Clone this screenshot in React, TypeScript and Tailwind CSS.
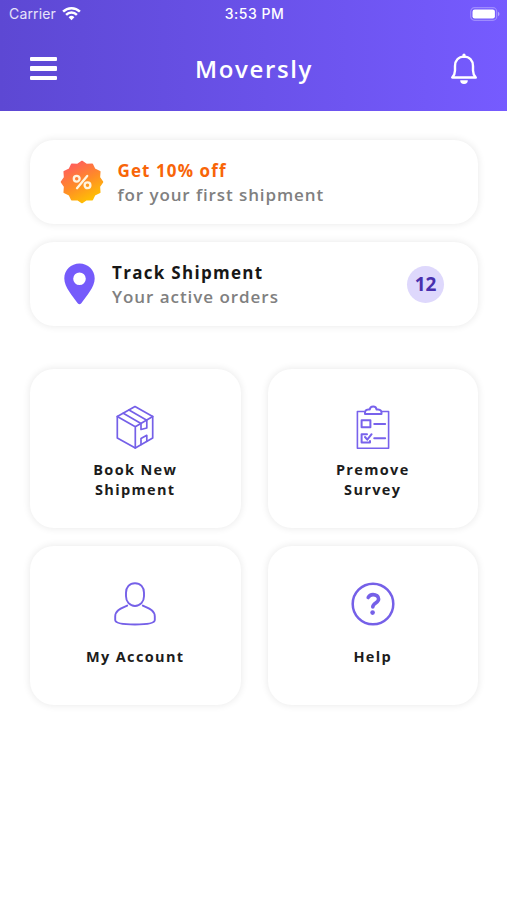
import type { ReactNode } from "react";

function WifiIcon() {
  return (
    <svg width="19" height="15" viewBox="0 0 19 15" fill="none" stroke="#fff" strokeWidth="2.5">
      <path d="M1.1 5.6a12 12 0 0 1 16.8 0" />
      <path d="M4.1 8.8a7.7 7.7 0 0 1 10.8 0" />
      <path d="M9.5 14.2 6.6 11.3a4.1 4.1 0 0 1 5.8 0z" fill="#fff" stroke="none" />
    </svg>
  );
}

function BatteryIcon() {
  return (
    <svg width="30" height="14" viewBox="0 0 30 14" fill="none">
      <rect x="0.7" y="0.7" width="26" height="12.6" rx="3.8" stroke="#fff" strokeOpacity="0.3" strokeWidth="1.2" />
      <rect x="2.5" y="2.5" width="22.4" height="9" rx="2.2" fill="#fff" />
      <path d="M28 4.8v4.4q1.5-.7 1.5-2.2T28 4.8z" fill="#fff" fillOpacity="0.45" />
    </svg>
  );
}

function BellIcon() {
  return (
    <svg width="28" height="32" viewBox="0 0 28 32" fill="none" stroke="#fff" strokeWidth="2.4" strokeLinecap="round" strokeLinejoin="round">
      <path d="M14 3.6c-5.6 0-9 4-9 9.3v4.700c0 3.500-1.200 5.200-2.800 6.900h23.600c-1.600-1.700-2.800-3.400-2.800-6.900v-4.700c0-5.300-3.400-9.300-9-9.300z" />
      <path d="M14 2v1.500" strokeWidth="3.200" />
      <path d="M10.200 27.200h7.600a3.800 3.800 0 0 1-7.600 0z" fill="#fff" stroke="none" />
    </svg>
  );
}

function OfferBadge() {
  return (
    <svg width="44" height="44" viewBox="-22 -22 44 44" fill="none">
      <defs>
        <linearGradient id="offer" x1="-10" y1="-19" x2="10" y2="19" gradientUnits="userSpaceOnUse">
          <stop stopColor="#ff5d5d" />
          <stop offset="0.5" stopColor="#ff8b28" />
          <stop offset="1" stopColor="#ffc400" />
        </linearGradient>
      </defs>
      <path
        d="M0-20.500 4.700-17.400 10.300-17.800 12.700-12.700 17.800-10.300 17.400-4.700 20.500 0 17.400 4.700 17.800 10.300 12.700 12.700 10.300 17.800 4.700 17.400 0 20.500-4.700 17.400-10.300 17.800-12.700 12.700-17.800 10.300-17.400 4.700-20.500 0-17.400-4.700-17.800-10.300-12.700-12.700-10.300-17.800-4.700-17.400z"
        fill="url(#offer)"
        stroke="url(#offer)"
        strokeWidth="1.500"
        strokeLinejoin="round"
      />
      <g stroke="#fff4df" strokeWidth="2.300" strokeLinecap="round">
        <circle cx="-5.300" cy="-3.300" r="2.900" />
        <circle cx="5.500" cy="3.300" r="2.900" />
        <path d="M5.200-6.100-5 6.200" />
      </g>
    </svg>
  );
}

function PinIcon() {
  return (
    <svg width="31" height="42" viewBox="0 0 31 42">
      <path
        d="M15.500.5C7 .5.300 7 .300 15.400c0 8.400 8.200 17.600 13.400 24.800q1.800 2 3.600 0c5.200-7.200 13.400-16.400 13.400-24.800C30.700 7 24 .5 15.500.5zm0 9a6.300 6.300 0 1 1 0 12.600 6.300 6.300 0 0 1 0-12.600z"
        fill="#755bfb"
        fillRule="evenodd"
      />
    </svg>
  );
}

function BoxIcon() {
  return (
    <svg width="44" height="46" viewBox="0 0 44 46" fill="none" stroke="#7560e8" strokeWidth="1.700" strokeLinejoin="round" strokeLinecap="round">
      <path d="M22 2.500 39.700 12.500v21.500L22.300 44 4.300 34V12.500z" />
      <path d="M4.300 12.500 22.300 22.800 39.700 12.500M22.300 22.800V44" />
      <path d="M10.300 9.200 28 19.500v6l5.800-1.500v-7.800L16 5.900" />
      <path d="M28 40.500v-6l5.800-3.200v6" />
    </svg>
  );
}

function ClipboardIcon() {
  return (
    <svg width="36" height="46" viewBox="0 0 36 46" fill="none" stroke="#7862ec" strokeLinejoin="round" strokeLinecap="round">
      <path d="M9 7.500H2.400v36.800h31.200V7.500H27" strokeWidth="1.600" />
      <path d="M10 10h16.500q.5-4.300-3.500-4.600h-1.500C21.200 1.500 15.200 1.500 14.800 5.400h-1.500Q9.500 5.700 10 10z" strokeWidth="2" />
      <rect x="6.600" y="16.300" width="8.800" height="6.900" strokeWidth="2" />
      <path d="M12 30.200H6.600v8.200H15v-1.500M10 33l2.300 2.700 4.300-5.500" strokeWidth="2" />
      <path d="M19.200 20h11M19.200 34.300h11" strokeWidth="1.900" />
    </svg>
  );
}

function UserIcon() {
  return (
    <svg width="44" height="46" viewBox="0 0 44 46" fill="none" stroke="#7560e8" strokeWidth="1.900" strokeLinecap="round" strokeLinejoin="round">
      <path d="M22 2.200c-5.500 0-9 4-9 9.500v3.600c0 5.500 3.800 9.700 9 9.700s9-4.200 9-9.700v-3.600c0-5.500-3.500-9.500-9-9.500z" />
      <path d="M14.200 24.600C10 26.800 2.200 28.500 2.200 35.500V39q0 4.500 19.800 4.500T41.800 39v-3.500c0-7-7.800-8.700-12-10.900" />
    </svg>
  );
}

function HelpIcon() {
  return (
    <svg width="46" height="46" viewBox="0 0 46 46" fill="none" stroke="#7560e8" strokeLinecap="round" strokeLinejoin="round">
      <circle cx="23" cy="23" r="20.300" strokeWidth="2.500" />
      <path d="M18.200 16.500c1-2 2.600-2.900 4.800-2.900 3.200 0 5.600 1.700 5.600 4.400 0 4-5.800 4-5.800 8" strokeWidth="3.600" />
      <circle cx="22.600" cy="31.600" r="2.300" fill="#7560e8" stroke="none" />
    </svg>
  );
}

const cardStyle = "rounded-[24px] bg-white shadow-[0_0_7px_1px_rgba(0,0,0,0.08)]";

function Tile({ icon, gap, children }: { icon: ReactNode; gap: string; children: ReactNode }) {
  return (
    <button className={`flex h-[159px] flex-col items-center pt-[35px] ${cardStyle}`}>
      <span className="flex h-[46px] items-center">{icon}</span>
      <span className={`${gap} text-[14.500px] leading-5 font-bold tracking-[1.350px] text-[#1c1c1c]`}>{children}</span>
    </button>
  );
}

export default function App() {
  return (
    <main className="h-[900px] w-[507px] overflow-hidden bg-white font-['Open_Sans',sans-serif]">
      <header className="h-[111px] bg-linear-to-r from-[#5d48d3] to-[#765bff] text-white">
        <div className="grid h-[27px] grid-cols-[1fr_auto_1fr] items-center pr-[7px] pl-[9px] font-['Inter',sans-serif]">
          <div className="flex items-center gap-[6px] text-[14px] tracking-[0.150px] text-white/85">
            <span>Carrier</span>
            <WifiIcon />
          </div>
          <span className="text-[14px] font-medium tracking-[0.500px]">3:53 PM</span>
          <div className="flex justify-end"><BatteryIcon /></div>
        </div>
        <div className="grid h-[83px] grid-cols-[1fr_auto_1fr] items-center pr-[29px] pl-[30px]">
          <button aria-label="Menu" className="flex w-[27px] flex-col gap-[5px]">
            <span className="h-[4.500px] rounded-[1px] bg-white" />
            <span className="h-[4.500px] rounded-[1px] bg-white" />
            <span className="h-[4.500px] rounded-[1px] bg-white" />
          </button>
          <h1 className="text-2xl font-semibold tracking-[1.650px]">Moversly</h1>
          <button aria-label="Notifications" className="flex justify-end"><BellIcon /></button>
        </div>
      </header>

      <div className="flex flex-col gap-[18px] pt-[29px] pr-[29px] pl-[30px]">
        <section className={`flex h-[84px] items-center pl-[30px] ${cardStyle}`}>
          <OfferBadge />
          <div className="ml-[13.500px] pt-[2px] text-[17px] leading-6">
            <p className="font-bold tracking-[1.100px] text-[#f86508]">Get 10% off</p>
            <p className="font-semibold tracking-[0.900px] text-[#808080]">for your first shipment</p>
          </div>
        </section>
        <section className={`flex h-[84px] items-center pr-[34px] pl-[34px] ${cardStyle}`}>
          <PinIcon />
          <div className="ml-[17px] pt-[2px] text-[17px] leading-6">
            <p className="font-bold tracking-[1.300px] text-[#171717]">Track Shipment</p>
            <p className="font-semibold tracking-[0.950px] text-[#808080]">Your active orders</p>
          </div>
          <span className="ml-auto flex size-[37px] items-center justify-center rounded-full bg-[#ded8fc] pt-px text-[19px] font-bold text-[#482fae]">12</span>
        </section>
      </div>

      <nav className="grid grid-cols-2 gap-x-[27px] gap-y-[18px] pt-[43px] pr-[29px] pl-[30px]">
        <Tile icon={<BoxIcon />} gap="mt-[10px]">Book New<br />Shipment</Tile>
        <Tile icon={<ClipboardIcon />} gap="mt-[10px]">Premove<br />Survey</Tile>
        <Tile icon={<UserIcon />} gap="mt-[20px]">My Account</Tile>
        <Tile icon={<HelpIcon />} gap="mt-[20px]">Help</Tile>
      </nav>
    </main>
  );
}
